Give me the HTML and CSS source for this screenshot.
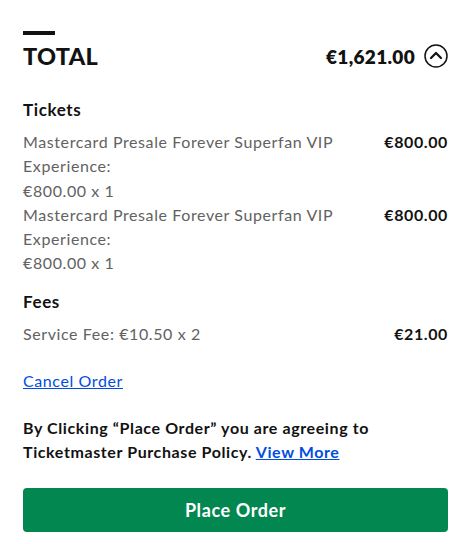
FILE: index.html
```html
<!DOCTYPE html>
<html lang="en">
  <head>
    <meta charset="UTF-8">
    <meta name="viewport" content="width=device-width, initial-scale=1.0">
    <title>Order Summary</title>
    <link rel="stylesheet" href="styles.css">
  </head>
  <body>
    <div id="resumo">
      <div class="barra"></div>
      <div class="total">
        <h1>TOTAL</h1>
        <div class="total-valor">
          <span>€1,621.00</span>
          <svg class="seta" width="24" height="24" viewBox="0 0 24 24">
            <circle cx="12" cy="12" r="11" fill="none" stroke="#121212" stroke-width="1.5"/>
            <path d="M7 14l5-5 5 5" fill="none" stroke="#121212" stroke-width="2.2" stroke-linecap="round" stroke-linejoin="round"/>
          </svg>
        </div>
      </div>

      <h2>Tickets</h2>
      <div class="linha">
        <p>Mastercard Presale Forever Superfan VIP Experience:<br>€800.00 x 1</p>
        <b>€800.00</b>
      </div>
      <div class="linha">
        <p>Mastercard Presale Forever Superfan VIP Experience:<br>€800.00 x 1</p>
        <b>€800.00</b>
      </div>

      <h2 class="fees">Fees</h2>
      <div class="linha">
        <p>Service Fee: €10.50 x 2</p>
        <b>€21.00</b>
      </div>

      <a href="#" class="cancelar">Cancel Order</a>

      <p class="aviso">By Clicking “Place Order” you are agreeing to Ticketmaster Purchase Policy. <a href="#">View More</a></p>

      <button id="confirma">Place Order</button>
    </div>
  </body>
</html>
```

FILE: styles.css
```css
body {
  font-family: Lato, "Noto Sans", sans-serif;
  background-color: #fff;
  color: #121212;
  letter-spacing: 0.6px;
  margin: 0;
}
#resumo {
  width: 425px;
  margin-left: 23px;
  padding-top: 31px;
}
.barra {
  width: 32px;
  height: 4px;
  background-color: #121212;
}
.total {
  display: flex;
  justify-content: space-between;
  align-items: center;
  margin-top: 7px;
  height: 28px;
}
.total h1 {
  margin: 0;
  font-size: 23.5px;
  font-weight: 900;
  letter-spacing: 0.3px;
}
.total-valor {
  display: flex;
  align-items: center;
  gap: 9px;
  font-size: 19px;
  font-weight: 800;
  letter-spacing: 0.3px;
}
.seta {
  display: block;
}
h2 {
  margin: 28px 0 8px;
  font-size: 17px;
  font-weight: 700;
  line-height: 24px;
}
.fees {
  margin-top: 14px;
}
.linha {
  display: flex;
  justify-content: space-between;
  align-items: flex-start;
  font-size: 16px;
  line-height: 24.3px;
}
.linha p {
  margin: 0;
  width: 340px;
  color: #626262;
}
.linha b {
  font-weight: 700;
}
.cancelar {
  display: inline-block;
  margin-top: 23px;
  font-size: 16px;
  line-height: 24px;
  color: #024ddf;
}
.aviso {
  margin: 23px 0 0;
  font-size: 16px;
  font-weight: 700;
  line-height: 24px;
  width: 370px;
}
.aviso a {
  color: #024ddf;
}
#confirma {
  width: 100%;
  height: 44px;
  margin-top: 24px;
  border: none;
  border-radius: 4px;
  background-color: #038751;
  color: #fff;
  font-family: inherit;
  font-size: 18px;
  font-weight: 700;
  letter-spacing: 0.6px;
  cursor: pointer;
}
```
